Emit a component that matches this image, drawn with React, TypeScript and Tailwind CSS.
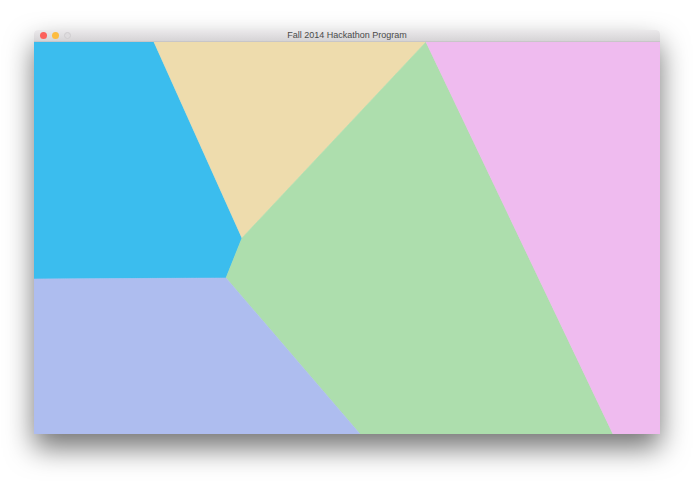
import React from 'react';

type Cell = { fill: string; points: string };

// Voronoi cells, in content-area coordinates (626 x 392)
const cells: Cell[] = [
  { fill: '#3bbdee', points: '0,0 120,0 208,196 192,236 0,237' },
  { fill: '#eedcad', points: '120,0 392,0 208,196' },
  { fill: '#addead', points: '392,0 579,392 326,392 192,236 208,196' },
  { fill: '#efbbef', points: '392,0 626,0 626,392 579,392' },
  { fill: '#aebdef', points: '0,237 192,236 326,392 0,392' },
];

export default function App() {
  return (
    <div className="h-[494px] w-[695px] bg-white pl-[34px] pt-[30px]">
      <div className="flex h-[404px] w-[626px] flex-col overflow-hidden rounded-t-[4px] shadow-[0_14px_28px_rgba(0,0,0,0.55)]">
        {/* Title bar */}
        <div className="relative flex h-[12px] shrink-0 items-center border-b border-[#c8c6c8] bg-gradient-to-b from-[#ebe9eb] to-[#d6d4d6]">
          <div className="flex items-center gap-[5px] pl-[6px]">
            <span className="h-[7px] w-[7px] rounded-full bg-[#fc605c]" />
            <span className="h-[7px] w-[7px] rounded-full bg-[#fdbc40]" />
            <span className="h-[7px] w-[7px] rounded-full border border-[#cfcdcf] bg-[#dedcde]" />
          </div>
          <div className="absolute inset-0 flex items-center justify-center font-['Liberation_Sans',sans-serif] text-[9px] leading-none text-[#4a4a4a]">
            Fall 2014 Hackathon Program
          </div>
        </div>

        {/* Diagram canvas */}
        <svg
          className="block h-[392px] w-[626px]"
          viewBox="0 0 626 392"
          preserveAspectRatio="none"
        >
          {cells.map((c, i) => (
            <polygon key={i} points={c.points} fill={c.fill} stroke={c.fill} strokeWidth={0.6} />
          ))}
        </svg>
      </div>
    </div>
  );
}
